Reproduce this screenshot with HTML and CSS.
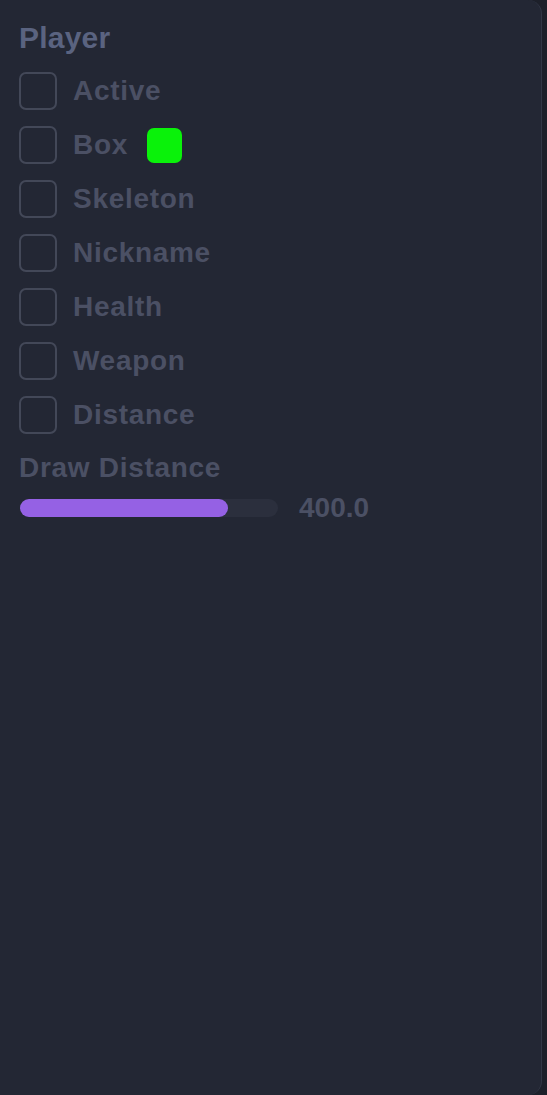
FILE: index.html
```html
<!DOCTYPE html>
<html lang="en">

<head>
    <meta charset="UTF-8">
    <meta name="viewport" content="width=device-width, initial-scale=1.0">
    <title>Player</title>
    <link rel="stylesheet" href="styles.css">
</head>

<body>
    <div class="panel">
        <h2 class="title">Player</h2>

        <!-- Toggles -->
        <div class="options">
            <label class="option"><span class="check"></span><span class="name">Active</span></label>
            <label class="option"><span class="check"></span><span class="name">Box</span><span class="swatch"></span></label>
            <label class="option"><span class="check"></span><span class="name">Skeleton</span></label>
            <label class="option"><span class="check"></span><span class="name">Nickname</span></label>
            <label class="option"><span class="check"></span><span class="name">Health</span></label>
            <label class="option"><span class="check"></span><span class="name">Weapon</span></label>
            <label class="option"><span class="check"></span><span class="name">Distance</span></label>
        </div>

        <!-- Slider -->
        <div class="slider-label">Draw Distance</div>
        <div class="slider">
            <div class="track"><div class="fill" style="width: 208px"></div></div>
            <span class="value">400.0</span>
        </div>
    </div>
</body>

</html>
```

FILE: styles.css
```css
body {
    margin: 0;
    padding: 0;
    background-color: #1d202a;
    font-family: "Liberation Sans", Arial, sans-serif;
    font-weight: bold;
}

.panel {
    box-sizing: border-box;
    width: 542px;
    height: 1095px;
    padding: 22px 19px 0 19px;
    background-color: #232734;
    border-right: 1px solid #323746;
    border-radius: 0 14px 14px 0;
}

.title {
    margin: 0;
    font-size: 30px;
    line-height: 32px;
    color: #5a6380;
    letter-spacing: 0.2px;
}

.options {
    display: flex;
    flex-direction: column;
    gap: 16px;
    margin-top: 18px;
}

.option {
    display: flex;
    align-items: center;
    height: 38px;
}

.check {
    box-sizing: border-box;
    width: 38px;
    height: 38px;
    border: 2px solid #434858;
    border-radius: 7px;
}

.name {
    margin-left: 16px;
    font-size: 28px;
    line-height: 32px;
    color: #4b5064;
    letter-spacing: 0.7px;
}

.swatch {
    width: 35px;
    height: 35px;
    margin-left: 19px;
    border-radius: 7px;
    background-color: #0af20a;
}

.slider-label {
    margin-top: 18px;
    font-size: 28px;
    line-height: 32px;
    color: #4b5064;
    letter-spacing: 0.7px;
}

.slider {
    display: flex;
    align-items: center;
    gap: 21px;
    margin-top: 10px;
    padding-left: 1px;
}

.track {
    width: 258px;
    height: 18px;
    border-radius: 9px;
    background-color: #2b2f3d;
}

.fill {
    height: 18px;
    border-radius: 9px;
    background-color: #9561e4;
}

.value {
    font-size: 28px;
    line-height: 28px;
    color: #4b5064;
}
```
